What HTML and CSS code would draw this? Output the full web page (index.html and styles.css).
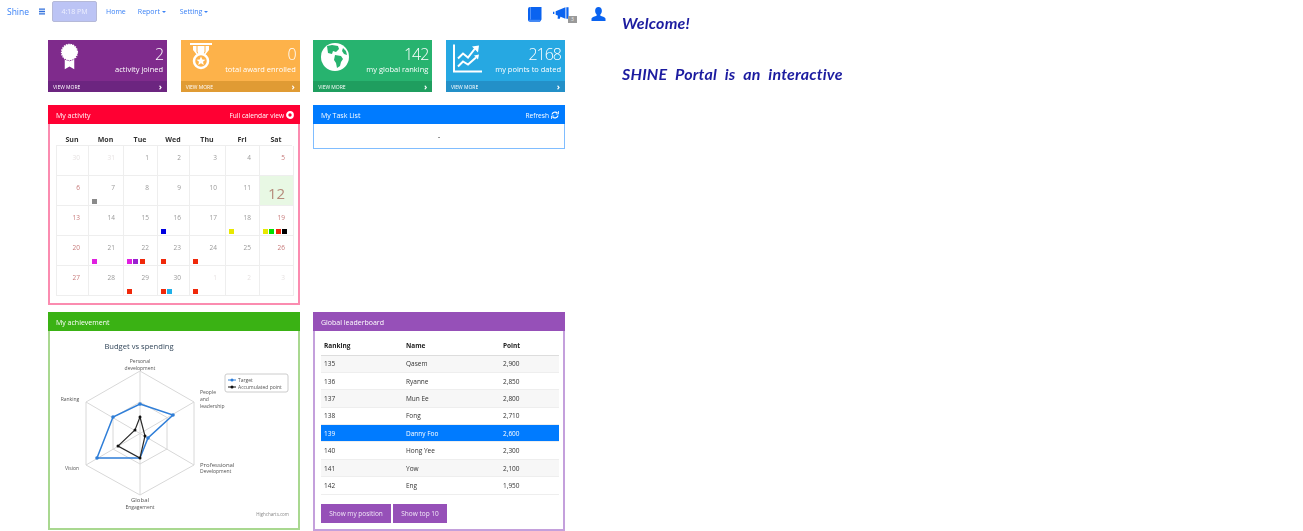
FILE: index.html
```html
<html>
  <head>
    <title>Shine</title>
    <meta name="viewport" content="width=device-width, initial-scale=1">
    <link rel="stylesheet" href="styles.css">
  </head>
  <body>
    <div class="page">
      <div class="main">
        <nav class="topbar">
          <a class="brand">Shine</a>
          <svg class="burger" viewBox="0 0 7 7"><path d="M0 0h7v1.600H0zM0 2.700h7v1.600H0zM0 5.400h7V7H0z"/></svg>
          <span class="clock-btn">4:18 PM</span>
          <a class="nav-link nav-home">Home</a>
          <a class="nav-link nav-report">Report <i class="caret"></i></a>
          <a class="nav-link">Setting <i class="caret"></i></a>
          <span class="top-icons">
            <svg class="top-book" viewBox="0 0 14 15"><path d="M2 0h11.500v12.600L12 14.800H2.200A2 2 0 0 1 0 13V2a2 2 0 0 1 2-2z"/><path d="M2.500 0v12.500M1 13.300h11" stroke="#7fb0ff" stroke-width=".6"/></svg>
            <span class="top-horn">
              <svg viewBox="0 0 18 14"><path d="M0 5h1.500v2.500H0zM3 4.500L14 0v13L3 8.500zM15 0h2.500v13H15zM5.500 9l3 1-.8 3H5.200z"/></svg>
              <span class="horn-badge">3</span>
            </span>
            <svg class="top-user" viewBox="0 0 15 15"><path d="M7.500 0c2.300 0 3.600 1.700 3.600 3.900 0 1.700-.7 3.200-1.600 4.100v1.400c1.800.7 4.800 1.400 5.500 3V15H0v-2.600c.7-1.600 3.700-2.300 5.500-3V8C4.600 7.100 3.900 5.600 3.900 3.900 3.900 1.700 5.200 0 7.500 0z"/></svg>
          </span>
        </nav>

        <div class="stats">
          <div class="stat stat-purple">
            <div class="stat-body">
              <svg class="stat-icon" viewBox="0 0 20 28"><circle cx="10" cy="9" r="8.300" stroke="#fff" stroke-width="1.500" stroke-dasharray="1.500 1" fill="#fff"/><path d="M5 17l5 1.500L15 17v10l-5-3-5 3z" fill="#fff"/></svg>
              <div class="stat-text"><div class="stat-num">2</div><div class="stat-label">activity joined</div></div>
            </div>
            <div class="stat-foot"><span>VIEW MORE</span><b>&#8250;</b></div>
          </div>
          <div class="stat stat-orange">
            <div class="stat-body">
              <svg class="stat-icon stat-icon-medal" viewBox="0 0 22 28"><path d="M0 0h22v2H0zM3 3h16v4l-4 5H7L3 7z" fill="#fff"/><path d="M7 3v6l2 3M15 3v6l-2 3" stroke="#fdb24a" fill="none"/><circle cx="11" cy="18" r="7" fill="none" stroke="#fff" stroke-width="2.500"/><path d="M11 13.500l1.300 3 3.200.2-2.500 2.100.8 3.200-2.800-1.700-2.800 1.700.8-3.200-2.500-2.100 3.200-.2z" fill="#fff"/></svg>
              <div class="stat-text"><div class="stat-num">0</div><div class="stat-label">total award enrolled</div></div>
            </div>
            <div class="stat-foot"><span>VIEW MORE</span><b>&#8250;</b></div>
          </div>
          <div class="stat stat-green">
            <div class="stat-body">
              <svg class="stat-icon stat-icon-wide" viewBox="0 0 28 28"><circle cx="14" cy="14" r="14" fill="#fff"/><path d="M6 3l5-1 6 1 1 3-3 3-3-1-1 3-4-1zM14 12l6 1 2 3-2 3-1 4-3 2-1-5-2-3zM22 5l3 3 1 4-3-1-2-3z" fill="#27b36f"/></svg>
              <div class="stat-text"><div class="stat-num">142</div><div class="stat-label">my global ranking</div></div>
            </div>
            <div class="stat-foot"><span>VIEW MORE</span><b>&#8250;</b></div>
          </div>
          <div class="stat stat-blue">
            <div class="stat-body">
              <svg class="stat-icon stat-icon-chart" viewBox="0 0 29 28" fill="none" stroke="#fff"><path d="M1 0v27h28" stroke-width="2"/><path d="M5 14l5-5 5 4 7-9" stroke-width="2"/><path d="M5 22l5-5 5 3 8-7" stroke-width="2"/><path d="M19 2l7-1-1 7zM21 11l5-1-1 5z" fill="#fff" stroke="none"/></svg>
              <div class="stat-text"><div class="stat-num">2168</div><div class="stat-label">my points to dated</div></div>
            </div>
            <div class="stat-foot"><span>VIEW MORE</span><b>&#8250;</b></div>
          </div>
        </div>

        <div class="panels panels-top">
          <section class="panel panel-red">
            <header class="panel-head">
              <span>My activity</span>
              <span class="head-right">Full calendar view <svg class="head-icon" viewBox="0 0 8 8"><circle cx="4" cy="4" r="2.800" fill="none" stroke="#fff" stroke-width="2.200"/></svg></span>
            </header>
            <div class="cal">
              <div class="cal-days">
                <span>Sun</span><span>Mon</span><span>Tue</span><span>Wed</span><span>Thu</span><span>Fri</span><span>Sat</span>
              </div>
              <div class="cal-grid">
                <div class="cell out">30</div><div class="cell out">31</div><div class="cell">1</div><div class="cell">2</div><div class="cell">3</div><div class="cell">4</div><div class="cell end">5</div>
                <div class="cell end">6</div><div class="cell">7<p class="dots"><i class="c-grey"></i></p></div><div class="cell">8</div><div class="cell">9</div><div class="cell">10</div><div class="cell">11</div><div class="cell today">12</div>
                <div class="cell end">13</div><div class="cell">14</div><div class="cell">15</div><div class="cell">16<p class="dots"><i class="c-blue"></i></p></div><div class="cell">17</div><div class="cell">18<p class="dots"><i class="c-yellow"></i></p></div><div class="cell end">19<p class="dots"><i class="c-yellow"></i><i class="c-lime"></i><i class="c-red"></i><i class="c-black"></i></p></div>
                <div class="cell end">20</div><div class="cell">21<p class="dots"><i class="c-pink"></i></p></div><div class="cell">22<p class="dots"><i class="c-pink"></i><i class="c-violet"></i><i class="c-red"></i></p></div><div class="cell">23<p class="dots"><i class="c-red"></i></p></div><div class="cell">24<p class="dots"><i class="c-red"></i></p></div><div class="cell">25</div><div class="cell end">26</div>
                <div class="cell end">27</div><div class="cell">28</div><div class="cell">29<p class="dots"><i class="c-red"></i></p></div><div class="cell">30<p class="dots"><i class="c-red"></i><i class="c-sky"></i></p></div><div class="cell out">1<p class="dots"><i class="c-red"></i></p></div><div class="cell out">2</div><div class="cell out">3</div>
              </div>
            </div>
          </section>

          <section class="panel panel-blue panel-task">
            <header class="panel-head">
              <span>My Task List</span>
              <span class="head-right">Refresh <svg class="head-icon" viewBox="0 0 8 8" fill="none" stroke="#fff" stroke-width="1.200"><path d="M1 3.500C1.300 1.500 4.500 0 6.500 2.200M7 4.500C6.700 6.500 3.500 8 1.500 5.800"/><path d="M7.500 0v3H4.800M.5 8V5h2.700" stroke-width=".8"/></svg></span>
            </header>
            <div class="task-body">-</div>
          </section>
        </div>

        <div class="panels">
          <section class="panel panel-green">
            <header class="panel-head"><span>My achievement</span></header>
            <svg class="radar" viewBox="0 0 250 196">
              <g transform="translate(-49 -332)">
                <text class="radar-title" x="138" y="350" text-anchor="middle">Budget vs spending</text>
                <g fill="none" stroke="#d8d8d8">
                  <path d="M139 372L193 403V466L139 496L85 466V403Z"/>
                  <path d="M139 403L166 418.500V450L139 465L112 450V418.500Z"/>
                  <path d="M139 372V496M85 403L193 466M193 403L85 466"/>
                </g>
                <path d="M139 405L172 416L147 439L139 459H96L112 418Z" fill="none" stroke="#2f7ed8" stroke-width="1.500"/>
                <path d="M139 418L144 437L139 459L117 447L134 431Z" fill="none" stroke="#2b2b2b" stroke-width="1.200"/>
                <g fill="#2f7ed8">
                  <circle cx="139" cy="405" r="1.800"/><circle cx="172" cy="416" r="1.800"/><circle cx="147" cy="439" r="1.800"/><circle cx="96" cy="459" r="1.800"/><circle cx="112" cy="418" r="1.800"/>
                </g>
                <g fill="#111">
                  <circle cx="139" cy="418" r="1.500"/><circle cx="144" cy="437" r="1.500"/><circle cx="139" cy="459" r="1.500"/><circle cx="117" cy="447" r="1.500"/><circle cx="134" cy="431" r="1.500"/>
                </g>
                <g class="radar-label" text-anchor="middle">
                  <text x="139" y="364">Personal</text><text x="139" y="371">development</text>
                  <text x="69" y="402">Ranking</text>
                  <text x="71" y="471">Vision</text>
                  <text class="radar-big" x="139" y="503">Global</text><text x="139" y="510">Engagement</text>
                </g>
                <g class="radar-label">
                  <text x="199" y="395">People</text><text x="199" y="402">and</text><text x="199" y="409">leadership</text>
                  <text class="radar-big" x="199" y="468">Professional</text><text x="199" y="474">Development</text>
                </g>
                <rect x="224" y="375" width="63" height="18" rx="2" fill="#fff" stroke="#ccc"/>
                <path d="M227 381h8" stroke="#2f7ed8"/><circle cx="231" cy="381" r="1.500" fill="#2f7ed8"/>
                <path d="M227 388h8" stroke="#111"/><circle cx="231" cy="388" r="1.500" fill="#111"/>
                <g class="radar-label"><text x="237" y="383">Target</text><text x="237" y="390">Accumulated point</text></g>
                <text class="radar-credit" x="288" y="517" text-anchor="end">Highcharts.com</text>
              </g>
            </svg>
          </section>

          <section class="panel panel-violet">
            <header class="panel-head"><span>Global leaderboard</span></header>
            <div class="board">
              <table>
                <thead>
                  <tr><th class="col-rank">Ranking</th><th class="col-name">Name</th><th>Point</th></tr>
                </thead>
                <tbody>
                  <tr class="alt"><td>135</td><td>Qasem</td><td>2,900</td></tr>
                  <tr><td>136</td><td>Ryanne</td><td>2,850</td></tr>
                  <tr class="alt"><td>137</td><td>Mun Ee</td><td>2,800</td></tr>
                  <tr><td>138</td><td>Fong</td><td>2,710</td></tr>
                  <tr class="me"><td>139</td><td>Danny Foo</td><td>2,600</td></tr>
                  <tr><td>140</td><td>Hong Yee</td><td>2,300</td></tr>
                  <tr class="alt"><td>141</td><td>Yow</td><td>2,100</td></tr>
                  <tr><td>142</td><td>Eng</td><td>1,950</td></tr>
                </tbody>
              </table>
              <div class="board-btns">
                <button>Show my position</button>
                <button>Show top 10</button>
              </div>
            </div>
          </section>
        </div>
      </div>

      <aside class="welcome">
        <p>Welcome!</p>
        <p>SHINE Portal is an interactive</p>
      </aside>
    </div>
  </body>
</html>
```

FILE: styles.css
```css
body {
  background: #ffffff;
  color: #333333;
  font-family: "Open Sans", "Liberation Sans", sans-serif;
  margin: 0;
}

.page {
  display: flex;
  filter: blur(0.3px);
  height: 531px;
  overflow: hidden;
}

.main {
  width: 622px;
}

.topbar {
  align-items: center;
  color: #3b82f6;
  display: flex;
  font-size: 7px;
  height: 23px;
  padding: 0 16px 0 7px;
}

.brand {
  font-size: 8.500px;
  margin-right: 10px;
}

.burger {
  fill: #2f6fdc;
  height: 7px;
  margin-right: 7px;
  width: 6px;
}

.clock-btn {
  background: #bcc4f5;
  border: 1px solid #b5b9d8;
  border-radius: 2px;
  color: #eef0ff;
  font-size: 7px;
  height: 19px;
  line-height: 19px;
  margin-right: 9px;
  text-align: center;
  width: 43px;
}

.nav-home {
  margin-right: 12px;
}

.nav-report {
  margin-right: 14px;
}

.caret {
  border-left: 2px solid transparent;
  border-right: 2px solid transparent;
  border-top: 2px solid #3b82f6;
  display: inline-block;
  vertical-align: middle;
}

.top-icons {
  align-items: center;
  display: flex;
  margin-left: auto;
  margin-top: 5px;
}

.top-icons svg {
  fill: #0a63f0;
}

.top-book {
  height: 15px;
  margin-right: 11px;
  width: 14px;
}

.top-horn {
  display: flex;
  height: 15px;
  margin-right: 14px;
  position: relative;
  width: 24px;
}

.top-horn svg {
  height: 13px;
  width: 16px;
}

.horn-badge {
  background: #999999;
  bottom: -1px;
  color: #eeeeee;
  font-size: 5px;
  height: 7px;
  line-height: 7px;
  position: absolute;
  right: 0;
  text-align: center;
  width: 9px;
}

.top-user {
  height: 14px;
  width: 15px;
}

.stats {
  display: grid;
  gap: 13.500px;
  grid-template-columns: repeat(4, 1fr);
  margin: 17px 57px 0 48px;
}

.stat {
  color: #ffffff;
  height: 52px;
}

.stat-body {
  display: flex;
  height: 41px;
  justify-content: space-between;
  padding: 0 4px 0 6px;
}

.stat-icon {
  height: 28px;
  margin: 3px 0 0 6px;
  width: 19px;
}

.stat-icon-medal {
  margin-left: 3px;
  width: 22px;
}

.stat-icon-wide {
  margin-left: 2px;
  width: 28px;
}

.stat-icon-chart {
  height: 29px;
  margin: 4px 0 0 1px;
  width: 29px;
}

.stat-text {
  text-align: right;
}

.stat-num {
  font-size: 16px;
  font-weight: 300;
  letter-spacing: -1px;
  line-height: 20px;
  margin-top: 4px;
}

.stat-label {
  font-size: 7.500px;
  line-height: 10px;
}

.stat-foot {
  align-items: center;
  display: flex;
  font-size: 5px;
  height: 11px;
  justify-content: space-between;
  padding: 0 5px;
}

.stat-foot b {
  font-size: 9px;
  line-height: 9px;
}

.stat-purple { background: #7f2b8c; }
.stat-purple .stat-foot { background: #6c2580; }
.stat-orange { background: #fdb24a; }
.stat-orange .stat-foot { background: #e09b34; }
.stat-green { background: #27b36f; }
.stat-green .stat-foot { background: #1f9e5f; }
.stat-blue { background: #26a8e2; }
.stat-blue .stat-foot { background: #2390c8; }

.panels {
  align-items: flex-start;
  display: grid;
  gap: 13px;
  grid-template-columns: 252px 252px;
  margin: 9px 0 0 48px;
}

.panels-top {
  height: 198px;
  margin-top: 13px;
}

.panel {
  border: 2px solid #cccccc;
  border-top: 0;
}

.panel-head {
  align-items: center;
  box-sizing: border-box;
  color: #ffffff;
  display: flex;
  font-size: 7px;
  height: 19px;
  justify-content: space-between;
  margin: 0 -2px;
  padding: 1px 6px 0 8px;
}

.head-right {
  align-items: center;
  display: flex;
  font-size: 6.600px;
  gap: 2px;
}

.head-icon {
  height: 8px;
  width: 8px;
}

.panel-red { border-color: #fb8cb0; height: 198px; }
.panel-red .panel-head { background: #ff0033; }
.panel-blue { border-color: #80bdff; border-width: 0 1px 1px; }
.panel-blue .panel-head { background: #007bff; margin: 0 -1px; }
.panel-green { border-color: #a9d890; height: 216px; }
.panel-green .panel-head { background: #3ab214; }
.panel-violet { border-color: #c4a0dc; height: 217px; }
.panel-violet .panel-head { background: #9650b8; }

.task-body {
  font-size: 8px;
  height: 24px;
  line-height: 24px;
  text-align: center;
}

.cal {
  padding: 0 6px;
}

.cal-days {
  display: grid;
  font-size: 7px;
  font-weight: 700;
  grid-template-columns: 32px 35px 34px 32px 36px 34px 34px;
  height: 21px;
  line-height: 32px;
  text-align: center;
}

.cal-grid {
  border-left: 1px solid #eeeeee;
  border-top: 1px solid #eeeeee;
  display: grid;
  grid-auto-rows: 30px;
  grid-template-columns: 32px 35px 34px 32px 36px 34px 34px;
}

.cell {
  border-bottom: 1px solid #eeeeee;
  border-right: 1px solid #eeeeee;
  color: #999999;
  font-size: 6.500px;
  line-height: 8px;
  padding: 8px 8px 0 0;
  position: relative;
  text-align: right;
}

.cell.end {
  color: #c77a7a;
}

.cell.out {
  color: #e6e2e2;
}

.cell.today {
  background: #e8f8e4;
  color: #b58a7a;
  font-size: 15px;
  line-height: 20px;
  padding: 7px 0 0;
  text-align: center;
}

.dots {
  bottom: 1px;
  display: flex;
  gap: 1.300px;
  left: 3px;
  margin: 0;
  position: absolute;
}

.dots i {
  height: 5px;
  width: 5px;
}

.c-grey { background: #8a8a8a; }
.c-blue { background: #0000e0; }
.c-yellow { background: #e8e800; }
.c-lime { background: #00e000; }
.c-red { background: #f0280a; }
.c-black { background: #000000; }
.c-pink { background: #e020e0; }
.c-violet { background: #9a20d0; }
.c-sky { background: #20b0e8; }

.radar {
  display: block;
  height: 196px;
  width: 250px;
}

.radar-title {
  fill: #33475b;
  font-size: 7.600px;
}

.radar-label {
  fill: #555555;
  font-size: 5px;
}

.radar-big {
  font-size: 6px;
}

.radar-credit {
  fill: #888888;
  font-size: 4.500px;
}

.board {
  padding: 6px 6px 0;
}

table {
  border-collapse: collapse;
  font-size: 6.500px;
  width: 238px;
}

th {
  border-bottom: 1px solid #dddddd;
  color: #222222;
  font-weight: 700;
  height: 18px;
  padding: 0 3px;
  text-align: left;
}

td {
  border-bottom: 1px solid #eeeeee;
  height: 17.400px;
  padding: 0 3px;
}

.col-rank {
  width: 76px;
}

.col-name {
  width: 91px;
}

.alt {
  background: #f7f7f7;
}

.me {
  background: #007bff;
  color: #ffffff;
}

.board-btns {
  display: flex;
  gap: 2px;
  margin-top: 9px;
}

button {
  background: #9650b8;
  border: 0;
  color: #f2e8f8;
  font-family: inherit;
  font-size: 6.500px;
  height: 19px;
  padding: 0;
  width: 70px;
}

button + button {
  width: 54px;
}

.welcome {
  color: #1c1ca0;
  font-family: "Lato", "DejaVu Sans", sans-serif;
  font-size: 16px;
  font-style: italic;
  font-weight: 700;
  letter-spacing: 0.2px;
  word-spacing: 4px;
}

.welcome p {
  line-height: 20px;
  margin: 13px 0 31px;
}
```
